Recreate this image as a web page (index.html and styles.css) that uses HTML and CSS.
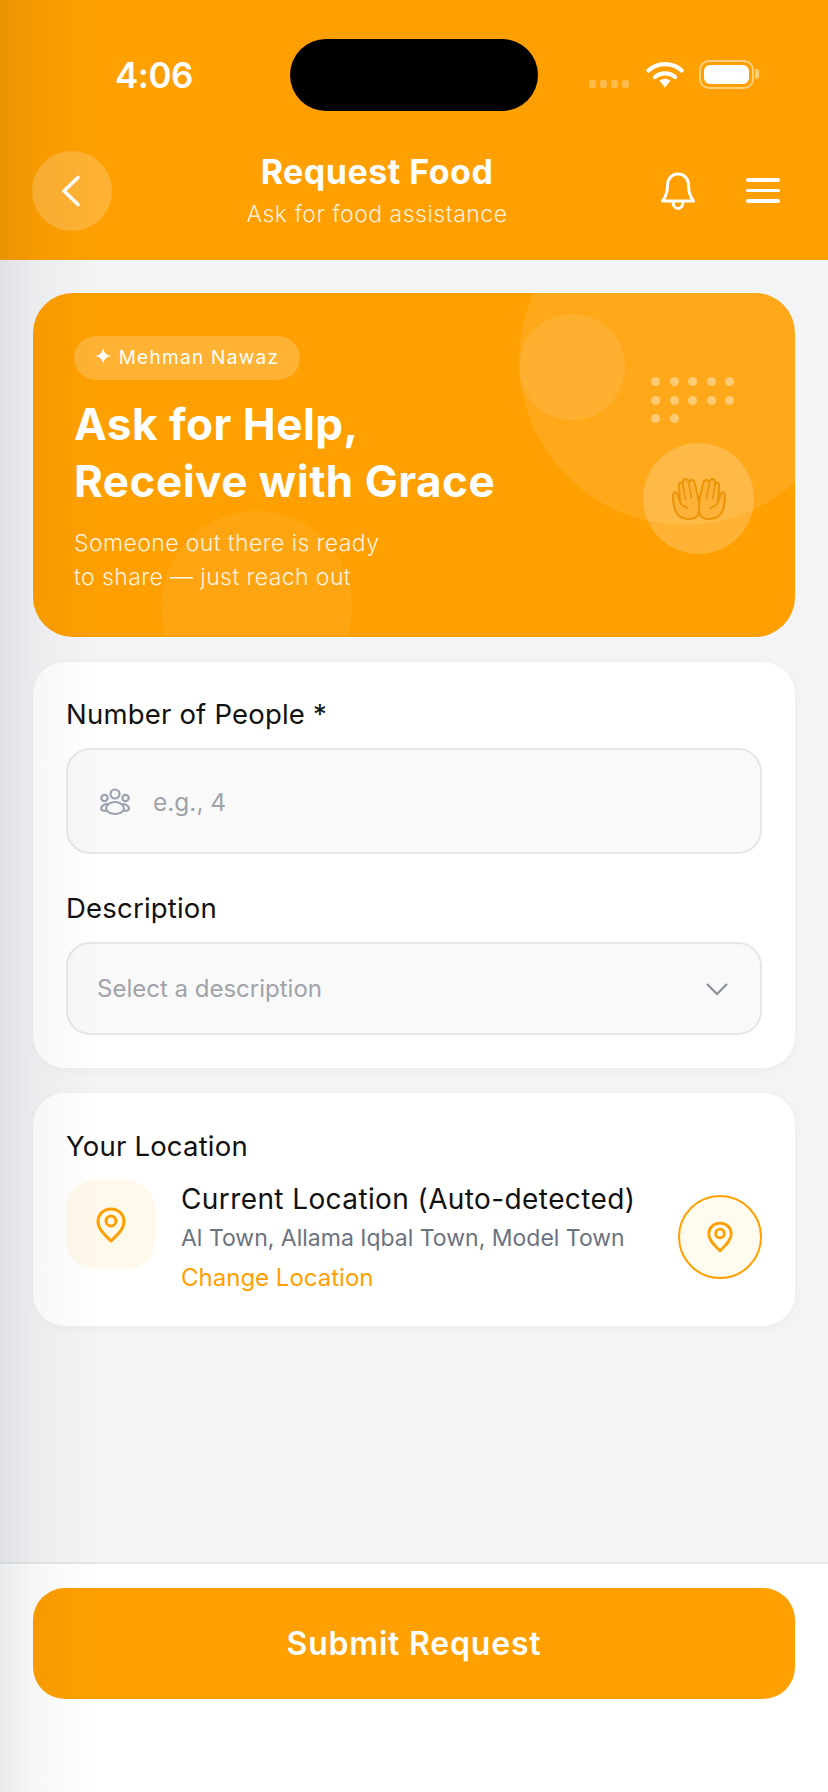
FILE: index.html
```html
<!DOCTYPE html>
<html lang="en">
<head>
    <meta charset="UTF-8">
    <meta name="viewport" content="width=device-width, initial-scale=1.0">
    <title>Request Food</title>
    <link rel="stylesheet" href="styles.css">
</head>
<body>
    <div id="app">
        <!-- Header -->
        <header class="top">
            <div class="status-bar">
                <span class="clock">4:06</span>
                <div class="island"></div>
                <div class="status-icons">
                    <div class="signal"><i></i><i></i><i></i><i></i></div>
                    <svg class="wifi" width="38" height="28" viewBox="0 0 38 28">
                        <path d="M2.500 10.500C11.500 2 26.500 2 35.500 10.500" fill="none" stroke="#fff" stroke-width="4.200" stroke-linecap="round"/>
                        <path d="M9 17C14.500 12.200 23.500 12.200 29 17" fill="none" stroke="#fff" stroke-width="4.200" stroke-linecap="round"/>
                        <path d="M13.500 20.800C16.500 18 21.500 18 24.500 20.800L19 27.500Z" fill="#fff"/>
                    </svg>
                    <div class="battery"><div class="battery-fill"></div></div>
                    <div class="battery-nub"></div>
                </div>
            </div>
            <div class="nav">
                <button class="back-btn">
                    <svg width="22" height="32" viewBox="0 0 22 32"><path d="M18 2.500L4 16l14 13.500" fill="none" stroke="#fff" stroke-width="3.600" stroke-linecap="round" stroke-linejoin="round"/></svg>
                </button>
                <div class="nav-title">
                    <h1>Request Food</h1>
                    <p>Ask for food assistance</p>
                </div>
                <div class="nav-icons">
                    <svg width="36" height="38" viewBox="0 0 36 38">
                        <path d="M18 2C11 2 7.500 7.500 7.500 13.500c0 7-1.500 11-5 15.500h31c-3.500-4.500-5-8.500-5-15.500C28.500 7.500 25 2 18 2Z" fill="none" stroke="#fff" stroke-width="3" stroke-linejoin="round"/>
                        <path d="M13 29.500c0 4.500 2.200 7 5 7s5-2.500 5-7" fill="none" stroke="#fff" stroke-width="3"/>
                    </svg>
                    <div class="burger"><i></i><i></i><i></i></div>
                </div>
            </div>
        </header>

        <main class="content">
            <!-- Hero -->
            <section class="hero">
                <div class="circle circle-big"></div>
                <div class="circle circle-small"></div>
                <div class="circle circle-low"></div>
                <div class="circle circle-hands">
                    <svg width="54" height="43" viewBox="0 0 54 43">
                        <g id="hand">
                            <path d="M27 35C26.500 40 21 42.500 16 42 9 41.500 4 37.500 2.500 31 1.500 27 .8 21 1.200 17c.3-2.300 3.300-2.300 4 0L8 25 6.800 8c-.2-2.500 3.200-3 4-.6L11 5c.2-3.200 4-4.200 5-1L17.500 4.500c1-2.500 4.500-2 5 .8L26 20c.8 4 1.500 10 1 15Z" fill="rgba(255,160,20,.25)" stroke="#EA9408" stroke-width="2" stroke-linejoin="round"/>
                            <path d="M10.800 7.500l2.700 14.500M16.500 5l3 16M8 25c1 3 5 5 8 6" fill="none" stroke="#EA9408" stroke-width="1.600" stroke-linecap="round"/>
                        </g>
                        <use href="#hand" transform="translate(54 0) scale(-1 1)"/>
                    </svg>
                </div>
                <div class="dots">
                    <i></i><i></i><i></i><i></i><i></i>
                    <i></i><i></i><i></i><i></i><i></i>
                    <i></i><i></i>
                </div>
                <div class="hero-text">
                    <span class="pill"><span class="star">✦</span> Mehman Nawaz</span>
                    <h2>Ask for Help,<br>Receive with Grace</h2>
                    <p>Someone out there is ready<br>to share — just reach out</p>
                </div>
            </section>

            <!-- Form -->
            <section class="card form-card">
                <label class="label">Number of People *</label>
                <div class="field field-people">
                    <svg width="32" height="28" viewBox="0 0 32 28" fill="none" stroke="#9CA3AF" stroke-width="2.200">
                        <circle cx="16" cy="6" r="4.500"/>
                        <circle cx="5.500" cy="10" r="3.200"/>
                        <circle cx="26.500" cy="10" r="3.200"/>
                        <path d="M9 16c-4 0-7 2-7 4.500 0 1.500 2 2.500 5 2.500M23 16c4 0 7 2 7 4.500 0 1.500-2 2.500-5 2.500"/>
                        <path d="M16 14c-5 0-9 3-9 6.500 0 3 4 5.500 9 5.500s9-2.500 9-5.500C25 17 21 14 16 14Z"/>
                    </svg>
                    <span class="placeholder-lg">e.g., 4</span>
                </div>
                <label class="label label-second">Description</label>
                <div class="field field-select">
                    <span class="placeholder">Select a description</span>
                    <svg width="24" height="14" viewBox="0 0 24 14"><path d="M2 2l10 10L22 2" fill="none" stroke="#8B9098" stroke-width="2.200"/></svg>
                </div>
            </section>

            <!-- Location -->
            <section class="card location-card">
                <div class="label">Your Location</div>
                <div class="location-row">
                    <div class="pin-tile">
                        <svg width="30" height="36" viewBox="0 0 30 36" fill="none" stroke="#FF9F00" stroke-width="3">
                            <path d="M15 34C9 28 2 22 2 14.500 2 7 8 2 15 2s13 5 13 12.500C28 22 21 28 15 34Z" stroke-linejoin="round"/>
                            <circle cx="15" cy="14" r="5"/>
                        </svg>
                    </div>
                    <div class="location-text">
                        <div class="loc-title">Current Location (Auto-detected)</div>
                        <div class="loc-address">Al Town, Allama Iqbal Town, Model Town</div>
                        <a class="loc-change">Change Location</a>
                    </div>
                    <button class="pin-btn">
                        <svg width="26" height="32" viewBox="0 0 30 36" fill="none" stroke="#FF9F00" stroke-width="3.200">
                            <path d="M15 34C9 28 2 22 2 14.500 2 7 8 2 15 2s13 5 13 12.500C28 22 21 28 15 34Z" stroke-linejoin="round"/>
                            <circle cx="15" cy="14" r="5"/>
                        </svg>
                    </button>
                </div>
            </section>
        </main>

        <footer class="bottom">
            <button class="submit">Submit Request</button>
        </footer>

        <div class="edge-shade"></div>
    </div>
</body>
</html>
```

FILE: styles.css
```css
* {
    box-sizing: border-box;
}

body {
    margin: 0;
    font-family: Inter, "Liberation Sans", sans-serif;
    background-color: #F3F4F6;
    color: #111;
}

button {
    border: none;
    padding: 0;
    font-family: inherit;
}

#app {
    position: relative;
    display: flex;
    flex-direction: column;
    width: 828px;
    height: 1792px;
    overflow: hidden;
}

.edge-shade {
    position: absolute;
    top: 0;
    left: 0;
    bottom: 0;
    width: 110px;
    pointer-events: none;
    background: linear-gradient(to right, rgba(20,30,40,.09), rgba(20,30,40,.035) 35px, rgba(20,30,40,0) 100px);
}

/* header */
.top {
    height: 260px;
    flex-shrink: 0;
    background-color: #FF9F00;
    color: white;
}

.status-bar {
    display: flex;
    align-items: center;
    height: 72px;
    margin-top: 39px;
    padding-left: 115px;
}

.clock {
    width: 175px;
    font-size: 35px;
    font-weight: 600;
    letter-spacing: -0.5px;
}

.island {
    width: 248px;
    height: 72px;
    border-radius: 36px;
    background: #000;
}

.status-icons {
    display: flex;
    align-items: center;
    margin-left: 51px;
    height: 50px;
}

.signal {
    display: flex;
    gap: 4px;
    margin-top: 18px;
}

.signal i {
    width: 7px;
    height: 8px;
    border-radius: 2px;
    background: rgba(255,255,255,.3);
}

.wifi {
    margin-left: 17px;
    margin-top: -2px;
}

.battery {
    width: 55px;
    height: 29px;
    margin-left: 15px;
    margin-top: -2px;
    padding: 3px;
    border: 2px solid rgba(255,255,255,.5);
    border-radius: 10px;
}

.battery-fill {
    width: 100%;
    height: 100%;
    border-radius: 6px;
    background: white;
}

.battery-nub {
    width: 4px;
    height: 10px;
    margin-left: 1px;
    margin-top: -2px;
    border-radius: 0 3px 3px 0;
    background: rgba(255,255,255,.5);
}

.nav {
    display: flex;
    align-items: center;
    height: 81px;
    margin-top: 39px;
    padding: 0 32px;
}

.back-btn {
    display: flex;
    align-items: center;
    justify-content: center;
    width: 80px;
    height: 80px;
    flex-shrink: 0;
    border-radius: 50%;
    background: rgba(255,255,255,.2);
    padding-right: 3px;
}

.nav-title {
    width: 530px;
    flex-shrink: 0;
    text-align: center;
}

.nav-title h1 {
    margin: 0;
    font-size: 34px;
    line-height: 40px;
    font-weight: 700;
    letter-spacing: 0.5px;
}

.nav-title p {
    margin: 7px 0 0;
    font-size: 23px;
    line-height: 30px;
    font-weight: 300;
    letter-spacing: 0.5px;
    color: rgba(255,255,255,.85);
}

.nav-icons {
    display: flex;
    align-items: center;
    gap: 50px;
    margin-left: 18px;
}

.burger {
    display: flex;
    flex-direction: column;
    gap: 7px;
}

.burger i {
    display: block;
    width: 34px;
    height: 3.500px;
    border-radius: 2px;
    background: white;
}

/* main */
.content {
    flex: 1;
    display: flex;
    flex-direction: column;
    gap: 25px;
    padding: 33px 33px 0;
}

.hero {
    position: relative;
    height: 344px;
    flex-shrink: 0;
    overflow: hidden;
    border-radius: 40px;
    background: #FF9F00;
    color: white;
}

.circle {
    position: absolute;
    border-radius: 50%;
    background: rgba(255,255,255,.1);
}

.circle-big {
    left: 486px;
    top: -98px;
    width: 330px;
    height: 330px;
}

.circle-small {
    left: 486px;
    top: 21px;
    width: 106px;
    height: 106px;
}

.circle-low {
    left: 128px;
    top: 218px;
    width: 191px;
    height: 191px;
    background: rgba(255,255,255,.07);
}

.circle-hands {
    display: flex;
    align-items: center;
    justify-content: center;
    left: 610px;
    top: 150px;
    width: 111px;
    height: 111px;
    background: rgba(255,255,255,.2);
}

.dots {
    position: absolute;
    left: 618px;
    top: 84px;
    display: grid;
    grid-template-columns: repeat(5, 9px);
    gap: 9.500px;
}

.dots i {
    width: 9px;
    height: 9px;
    border-radius: 50%;
    background: rgba(255,255,255,.4);
}

.hero-text {
    position: relative;
    padding: 43px 0 0 41px;
}

.pill {
    display: inline-block;
    height: 44px;
    padding: 0 21px 0 20px;
    border-radius: 22px;
    background: rgba(255,255,255,.2);
    font-size: 19px;
    line-height: 44px;
    letter-spacing: 1.300px;
    white-space: nowrap;
}

.star {
    font-size: 22px;
    line-height: 20px;
    letter-spacing: 0;
}

.hero-text h2 {
    margin: 16px 0 0;
    font-size: 44px;
    line-height: 57px;
    font-weight: 700;
    letter-spacing: 0.5px;
}

.hero-text p {
    margin: 16px 0 0;
    font-size: 23px;
    line-height: 34px;
    font-weight: 300;
    letter-spacing: 0.4px;
    color: rgba(255,255,255,.88);
}

.card {
    border-radius: 32px;
    background: white;
    box-shadow: 0 2px 10px rgba(0,0,0,.04);
    padding: 0 33px;
}

.form-card {
    height: 406px;
    padding-top: 35px;
}

.label {
    display: block;
    font-size: 27.500px;
    line-height: 34px;
    letter-spacing: 0.2px;
    color: #111;
}

.label-second {
    margin-top: 37px;
}

.field {
    display: flex;
    align-items: center;
    margin-top: 17px;
    border: 2px solid #E6E7E9;
    border-radius: 24px;
    background: #F9F9FA;
}

.field-people {
    height: 106px;
    gap: 22px;
    padding: 2px 0 0 31px;
}

.field-select {
    height: 93px;
    justify-content: space-between;
    padding: 0 31px 0 29px;
}

.placeholder-lg {
    font-size: 24.500px;
    color: #A0A3A8;
}

.placeholder {
    font-size: 24px;
    color: #A0A3A8;
}

.location-card {
    height: 233px;
    padding-top: 36px;
}

.location-row {
    display: flex;
    align-items: flex-start;
    margin-top: 17px;
}

.pin-tile {
    display: flex;
    align-items: center;
    justify-content: center;
    width: 89px;
    height: 89px;
    flex-shrink: 0;
    border-radius: 28px;
    background: #FFF9EC;
}

.location-text {
    width: 497px;
    margin: 1px 0 0 26px;
}

.loc-title {
    font-size: 28px;
    line-height: 36px;
    letter-spacing: 0.4px;
    white-space: nowrap;
}

.loc-address {
    margin-top: 5px;
    font-size: 23px;
    line-height: 32px;
    color: #6B7280;
    white-space: nowrap;
}

.loc-change {
    display: block;
    margin-top: 8px;
    font-size: 24px;
    line-height: 32px;
    color: #FF9F00;
}

.pin-btn {
    display: flex;
    align-items: center;
    justify-content: center;
    width: 84px;
    height: 84px;
    flex-shrink: 0;
    margin-top: 15px;
    border: 2px solid #FF9F00;
    border-radius: 50%;
    background: #FFFBEF;
}

/* footer */
.bottom {
    height: 230px;
    flex-shrink: 0;
    padding: 24px 33px 0;
    border-top: 2px solid #E5E7EB;
    background: white;
}

.submit {
    display: block;
    width: 100%;
    height: 111px;
    border-radius: 32px;
    background: #FF9F00;
    color: white;
    font-size: 32px;
    font-weight: 600;
    letter-spacing: 0.8px;
}
```
